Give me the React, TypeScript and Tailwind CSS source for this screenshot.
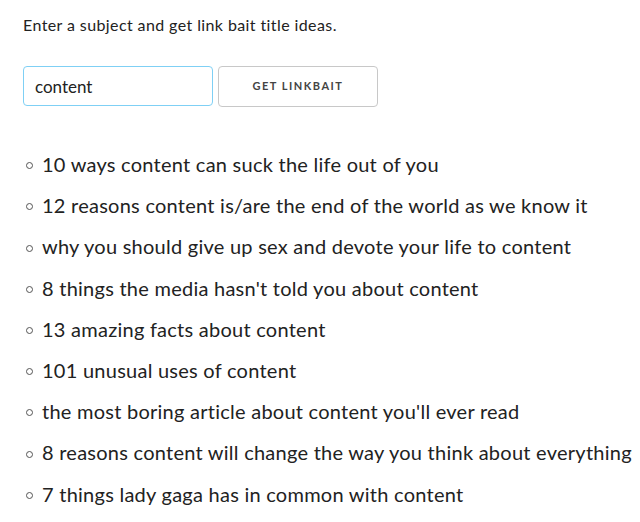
import React from "react";

const ideas = [
  "10 ways content can suck the life out of you",
  "12 reasons content is/are the end of the world as we know it",
  "why you should give up sex and devote your life to content",
  "8 things the media hasn't told you about content",
  "13 amazing facts about content",
  "101 unusual uses of content",
  "the most boring article about content you'll ever read",
  "8 reasons content will change the way you think about everything",
  "7 things lady gaga has in common with content",
];

export default function App() {
  return (
    <div className="w-[640px] h-[522px] bg-white text-[#222] font-['Lato',sans-serif] overflow-hidden">
      {/* Intro */}
      <p className="pl-[23px] pt-[15px] text-[16px] leading-[20px] tracking-[0.4px]">
        Enter a subject and get link bait title ideas.
      </p>

      {/* Form */}
      <div className="flex gap-[5px] pl-[23px] mt-[31px]">
        <input
          defaultValue="content"
          className="w-[190px] h-[40px] rounded-[4px] border border-[#7fd0f5] px-[11px] text-[17px] text-[#222] outline-none"
        />
        <button className="w-[160px] h-[41px] rounded-[4px] border border-[#c8c8c8] bg-white text-[11px] font-bold tracking-[1.5px] text-[#444]">
          GET LINKBAIT
        </button>
      </div>

      {/* Results */}
      <ul className="pl-[26px] mt-[37px] text-[20px] leading-[41.2px] tracking-[0.25px]">
        {ideas.map((idea) => (
          <li key={idea} className="flex items-center whitespace-nowrap">
            <span className="w-[7px] h-[7px] rounded-full border border-[#555] mr-[9px] mt-[2px] shrink-0" />
            {idea}
          </li>
        ))}
      </ul>
    </div>
  );
}
